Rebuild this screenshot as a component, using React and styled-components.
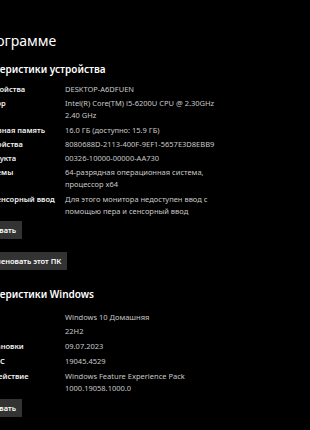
import React from "react";
import styled, { createGlobalStyle } from "styled-components";

const Global = createGlobalStyle`
  html, body { margin: 0; padding: 0; background: #000; overflow: hidden; }
  body { font-family: "Noto Sans", "Open Sans", sans-serif; }
`;

const Page = styled.div`
  width: 400px;
  margin-left: -35px;
  padding-top: 32px;
  height: 398px;
  background: #000;
  color: #fff;
`;

const Title = styled.h1`
  margin: 0 0 12px;
  font-size: 14px;
  line-height: 18px;
  font-weight: 400;
  color: #fff;
`;

const SectionTitle = styled.h2`
  margin: ${(p) => p.$top || 0}px 0 ${(p) => p.$bottom || 7}px;
  font-size: 10px;
  line-height: 14px;
  font-weight: 600;
  color: #fff;
`;

const InfoGrid = styled.dl`
  margin: 0;
  display: grid;
  grid-template-columns: 100px 1fr;
  row-gap: ${(p) => p.$gap}px;
  font-size: 7.5px;
  line-height: 12px;
`;

const Label = styled.dt`
  margin: 0;
  font-weight: 600;
  color: #f2f2f2;
  white-space: nowrap;
`;

const Value = styled.dd`
  margin: 0;
  color: #c9c9c9;
  max-width: 152px;
  white-space: ${(p) => (p.$nowrap ? "nowrap" : "normal")};
`;

const Button = styled.button`
  display: block;
  margin-top: ${(p) => p.$top || 0}px;
  border: 0;
  background: #333;
  color: #fff;
  font-family: inherit;
  font-size: 7.5px;
  font-weight: 600;
  line-height: 12px;
  padding: 3px 6px;
  cursor: pointer;
`;

const device = [
  ["Имя устройства", "DESKTOP-A6DFUEN"],
  ["Процессор", "Intel(R) Core(TM) i5-6200U CPU @ 2.30GHz   2.40 GHz"],
  ["Оперативная память", "16.0 ГБ (доступно: 15.9 ГБ)"],
  ["Код устройства", "8080688D-2113-400F-9EF1-5657E3D8EBB9", true],
  ["Код продукта", "00326-10000-00000-AA730", true],
  ["Тип системы", "64-разрядная операционная система, процессор x64"],
  ["Перо и сенсорный ввод", "Для этого монитора недоступен ввод с помощью пера и сенсорный ввод"],
];

const windows = [
  ["Выпуск", "Windows 10 Домашняя"],
  ["Версия", "22H2"],
  ["Дата установки", "09.07.2023"],
  ["Сборка ОС", "19045.4529"],
  ["Взаимодействие", "Windows Feature Experience Pack 1000.19058.1000.0"],
];

function Info({ rows, gap }) {
  return (
    <InfoGrid $gap={gap}>
      {rows.map(([k, v, nowrap]) => (
        <React.Fragment key={k}>
          <Label>{k}</Label>
          <Value $nowrap={nowrap}>{v}</Value>
        </React.Fragment>
      ))}
    </InfoGrid>
  );
}

export default function App() {
  return (
    <>
      <Global />
      <Page>
        <Title>О программе</Title>
        <SectionTitle>Характеристики устройства</SectionTitle>
        <Info rows={device} gap={2.3} />
        <Button $top={4}>Копировать</Button>
        <Button $top={13}>Переименовать этот ПК</Button>
        <SectionTitle $top={17} $bottom={10}>Характеристики Windows</SectionTitle>
        <Info rows={windows} gap={2.7} />
        <Button $top={5}>Копировать</Button>
      </Page>
    </>
  );
}
